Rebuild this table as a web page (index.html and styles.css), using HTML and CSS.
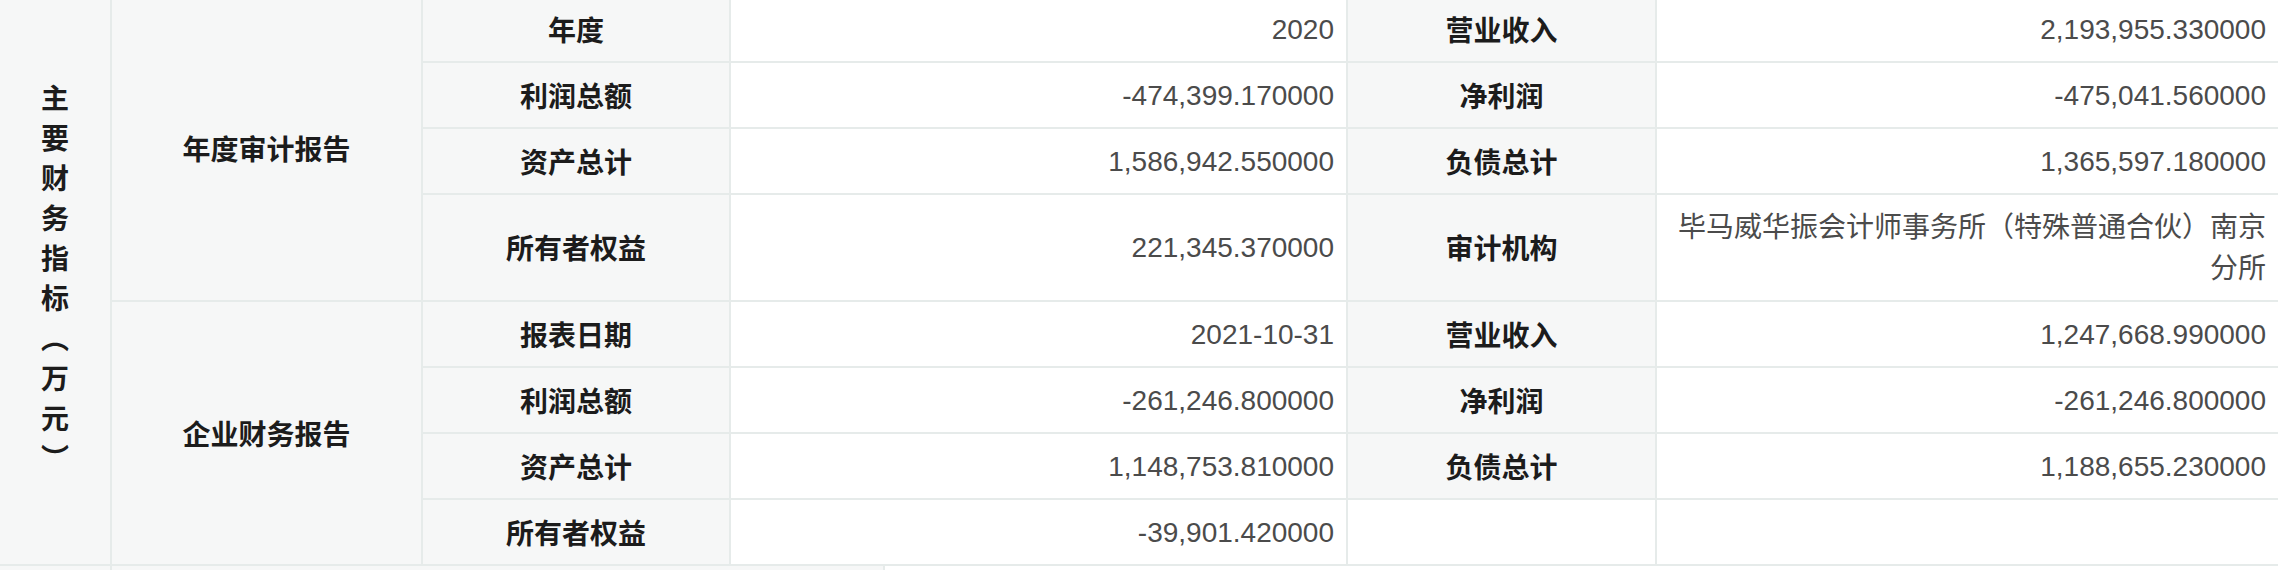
FILE: index.html
```html
<!DOCTYPE html>
<html lang="zh-CN">
<head>
<meta charset="utf-8">
<title>主要财务指标</title>
<link rel="stylesheet" href="styles.css">
</head>
<body>
<div class="sheet">
  <div class="fin">
    <div class="cell head side"><span class="vtext">主要财务指标（万元）</span></div>
    <div class="cell head cat cat1">年度审计报告</div>
    <div class="cell head cat cat2">企业财务报告</div>

    <div class="cell head lab">年度</div>
    <div class="cell val">2020</div>
    <div class="cell head lab">营业收入</div>
    <div class="cell val">2,193,955.330000</div>

    <div class="cell head lab">利润总额</div>
    <div class="cell val">-474,399.170000</div>
    <div class="cell head lab">净利润</div>
    <div class="cell val">-475,041.560000</div>

    <div class="cell head lab">资产总计</div>
    <div class="cell val">1,586,942.550000</div>
    <div class="cell head lab">负债总计</div>
    <div class="cell val">1,365,597.180000</div>

    <div class="cell head lab">所有者权益</div>
    <div class="cell val">221,345.370000</div>
    <div class="cell head lab">审计机构</div>
    <div class="cell val"><span class="wrap">毕马威华振会计师事务所（特殊普通合伙）南京分所</span></div>

    <div class="cell head lab">报表日期</div>
    <div class="cell val">2021-10-31</div>
    <div class="cell head lab">营业收入</div>
    <div class="cell val">1,247,668.990000</div>

    <div class="cell head lab">利润总额</div>
    <div class="cell val">-261,246.800000</div>
    <div class="cell head lab">净利润</div>
    <div class="cell val">-261,246.800000</div>

    <div class="cell head lab">资产总计</div>
    <div class="cell val">1,148,753.810000</div>
    <div class="cell head lab">负债总计</div>
    <div class="cell val">1,188,655.230000</div>

    <div class="cell head lab">所有者权益</div>
    <div class="cell val">-39,901.420000</div>
    <div class="cell val"></div>
    <div class="cell val"></div>
  </div>
  <div class="next">
    <div class="cell head"></div>
    <div class="cell head"></div>
    <div class="cell val"></div>
  </div>
</div>
</body>
</html>
```

FILE: styles.css
```css
html, body {
  margin: 0;
  padding: 0;
  background: #ffffff;
}

body {
  font-family: "Liberation Sans", "Noto Sans CJK SC", sans-serif;
  font-size: 28px;
  line-height: 41px;
  overflow: hidden;
}

.sheet {
  margin-top: -3px;
}

.fin {
  display: grid;
  grid-template-columns: 110px 309px 306px 615px 307px 1fr;
  gap: 2px;
  padding-bottom: 2px;
  background: #e6ebea;
}

.cell {
  display: flex;
  align-items: center;
  padding: 11.5px 12px;
  min-width: 0;
}

.head {
  background: #f6f7f7;
  color: #1c1c1c;
  font-weight: 700;
  justify-content: center;
  text-align: center;
  font-family: "Noto Sans CJK SC", "Liberation Sans", sans-serif;
}

.val {
  background: #ffffff;
  color: #4b4b4b;
  justify-content: flex-end;
  text-align: right;
}

.wrap {
  display: block;
}

.side {
  grid-column: 1;
  grid-row: 1 / span 8;
  padding: 0;
}

.vtext {
  writing-mode: vertical-rl;
  letter-spacing: 12px;
  line-height: 1;
  margin-top: 6px;
}

.cat1 {
  grid-column: 2;
  grid-row: 1 / span 4;
}

.cat2 {
  grid-column: 2;
  grid-row: 5 / span 4;
}

.next {
  display: grid;
  grid-template-columns: 110px 771px 1fr;
  gap: 2px;
  background: #e6ebea;
  height: 64px;
}
```
